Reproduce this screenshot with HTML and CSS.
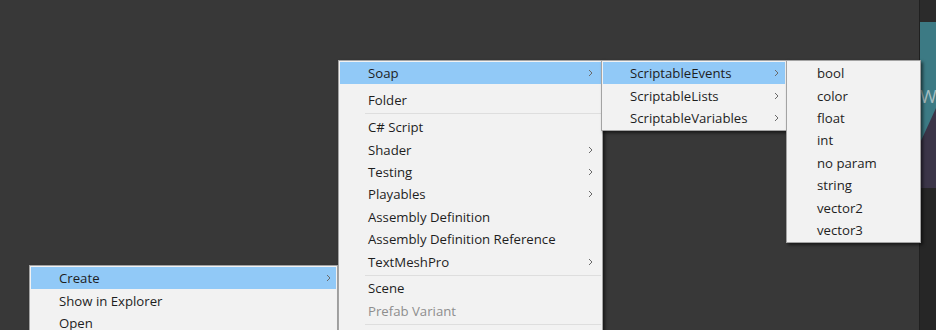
FILE: index.html
```html
<!DOCTYPE html>
<html>
<head>
<meta charset="utf-8">
<link rel="stylesheet" href="styles.css">
</head>
<body>
<div class="stage">
  <div class="side">
    <div class="side-top"></div>
    <div class="side-panel"><div class="teal"></div><span class="side-w">W</span></div>
  </div>

  <div class="menu menu-create">
    <div class="item hl"><span>Create</span><svg class="arrow" viewBox="0 0 5 8"><polyline points="1,1 4,4 1,7"/></svg></div>
    <div class="item"><span>Show in Explorer</span></div>
    <div class="item"><span>Open</span></div>
  </div>

  <div class="menu menu-main">
    <div class="item hl"><span>Soap</span><svg class="arrow" viewBox="0 0 5 8"><polyline points="1,1 4,4 1,7"/></svg></div>
    <div class="sep blank"></div>
    <div class="item"><span>Folder</span></div>
    <div class="sep"></div>
    <div class="item"><span>C# Script</span></div>
    <div class="item"><span>Shader</span><svg class="arrow" viewBox="0 0 5 8"><polyline points="1,1 4,4 1,7"/></svg></div>
    <div class="item"><span>Testing</span><svg class="arrow" viewBox="0 0 5 8"><polyline points="1,1 4,4 1,7"/></svg></div>
    <div class="item"><span>Playables</span><svg class="arrow" viewBox="0 0 5 8"><polyline points="1,1 4,4 1,7"/></svg></div>
    <div class="item"><span>Assembly Definition</span></div>
    <div class="item"><span>Assembly Definition Reference</span></div>
    <div class="item"><span>TextMeshPro</span><svg class="arrow" viewBox="0 0 5 8"><polyline points="1,1 4,4 1,7"/></svg></div>
    <div class="sep"></div>
    <div class="item"><span>Scene</span></div>
    <div class="item disabled"><span>Prefab Variant</span></div>
    <div class="sep"></div>
    <div class="spacer"></div>
  </div>

  <div class="menu menu-soap">
    <div class="item hl"><span>ScriptableEvents</span><svg class="arrow" viewBox="0 0 5 8"><polyline points="1,1 4,4 1,7"/></svg></div>
    <div class="item"><span>ScriptableLists</span><svg class="arrow" viewBox="0 0 5 8"><polyline points="1,1 4,4 1,7"/></svg></div>
    <div class="item"><span>ScriptableVariables</span><svg class="arrow" viewBox="0 0 5 8"><polyline points="1,1 4,4 1,7"/></svg></div>
  </div>

  <div class="menu menu-events">
    <div class="item"><span>bool</span></div>
    <div class="item"><span>color</span></div>
    <div class="item"><span>float</span></div>
    <div class="item"><span>int</span></div>
    <div class="item"><span>no param</span></div>
    <div class="item"><span>string</span></div>
    <div class="item"><span>vector2</span></div>
    <div class="item"><span>vector3</span></div>
  </div>
</div>
</body>
</html>
```
FILE: styles.css
```css
html, body {
  margin: 0;
  padding: 0;
}
body {
  background: #383838;
  font-family: "Open Sans", "Noto Sans", sans-serif;
}
.stage {
  position: relative;
  width: 936px;
  height: 330px;
  overflow: hidden;
  background: #383838;
}
.side {
  position: absolute;
  top: 0;
  right: 0;
  width: 16px;
  height: 330px;
  background: #262626;
  border-left: 1px solid #202020;
  display: flex;
  flex-direction: column;
}
.side-top {
  height: 22px;
  background: #2b2b2b;
}
.side-panel {
  position: relative;
  height: 166px;
  background: #3b3548;
  overflow: hidden;
}
.teal {
  position: absolute;
  inset: 0;
  background: #3c7a84;
  clip-path: polygon(0 0, 100% 0, 100% 86px, 0 121px);
}
.side-w {
  position: absolute;
  left: 0;
  top: 64px;
  font-size: 18px;
  color: #a9bfc3;
  line-height: 20px;
}
.menu {
  position: absolute;
  background: #f2f2f2;
  border: 1px solid #a3a3a3;
  padding: 1px;
  box-shadow: 2px 2px 3px rgba(0, 0, 0, 0.55);
  font-size: 13.2px;
  color: #1e1e1e;
}
.item {
  height: 22.4px;
  display: flex;
  align-items: center;
  justify-content: space-between;
  box-sizing: border-box;
  padding-right: 8px;
  white-space: nowrap;
}
.item span {
  line-height: 16px;
}
.item.hl {
  background: #91c9f7;
}
.item.disabled {
  color: #8e8e8e;
}
.arrow {
  width: 5px;
  height: 8px;
  fill: none;
  stroke: #6a6a6a;
  stroke-width: 1;
}
.sep {
  height: 4.6px;
  display: flex;
  align-items: center;
  padding-left: 25px;
}
.sep::after {
  content: "";
  flex: 1;
  height: 1px;
  background: #dedede;
}
.sep.blank::after {
  background: transparent;
}
.spacer {
  height: 30px;
}
.menu-create {
  left: 29px;
  top: 265px;
  width: 305px;
  padding-bottom: 30px;
}
.menu-create .item {
  padding-left: 28px;
  padding-right: 5px;
}
.menu-main {
  left: 338px;
  top: 60px;
  width: 261px;
}
.menu-main .item {
  padding-left: 28px;
}
.menu-soap {
  left: 601px;
  top: 60px;
  width: 182px;
}
.menu-soap .item {
  padding-left: 27px;
  padding-right: 6px;
}
.menu-events {
  left: 786px;
  top: 60px;
  width: 131px;
}
.menu-events .item {
  padding-left: 29px;
}
```
